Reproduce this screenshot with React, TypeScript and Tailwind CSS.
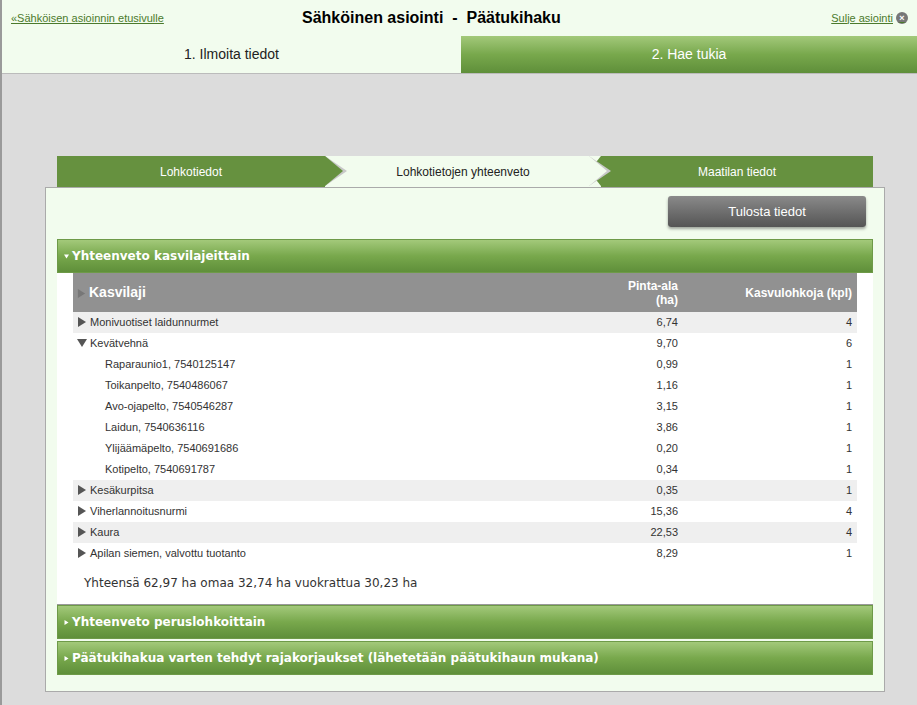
const rows: { name: string; ha: string; n: string; kind: "closed" | "open" | "child"; shade: boolean }[] = [
  { name: "Monivuotiset laidunnurmet", ha: "6,74", n: "4", kind: "closed", shade: true },
  { name: "Kevätvehnä", ha: "9,70", n: "6", kind: "open", shade: false },
  { name: "Raparaunio1, 7540125147", ha: "0,99", n: "1", kind: "child", shade: false },
  { name: "Toikanpelto, 7540486067", ha: "1,16", n: "1", kind: "child", shade: false },
  { name: "Avo-ojapelto, 7540546287", ha: "3,15", n: "1", kind: "child", shade: false },
  { name: "Laidun, 7540636116", ha: "3,86", n: "1", kind: "child", shade: false },
  { name: "Ylijäämäpelto, 7540691686", ha: "0,20", n: "1", kind: "child", shade: false },
  { name: "Kotipelto, 7540691787", ha: "0,34", n: "1", kind: "child", shade: false },
  { name: "Kesäkurpitsa", ha: "0,35", n: "1", kind: "closed", shade: true },
  { name: "Viherlannoitusnurmi", ha: "15,36", n: "4", kind: "closed", shade: false },
  { name: "Kaura", ha: "22,53", n: "4", kind: "closed", shade: true },
  { name: "Apilan siemen, valvottu tuotanto", ha: "8,29", n: "1", kind: "closed", shade: false },
];

const greenBar = "bg-gradient-to-b from-[#a3c97a] via-[#78a84c] to-[#5f8f3a]";
const verdana = "font-[DejaVu_Sans,Verdana,sans-serif]";

const Right = ({ size, color }: { size: number; color: string }) => (
  <svg width={size} height={size} viewBox="0 0 10 10" className="inline-block mr-[3px] align-[-1px]">
    <polygon points="1,0 9,5 1,10" fill={color} />
  </svg>
);
const Down = ({ size, color }: { size: number; color: string }) => (
  <svg width={size} height={size} viewBox="0 0 10 10" className="inline-block mr-[3px] align-[-1px]">
    <polygon points="0,1 10,1 5,9" fill={color} />
  </svg>
);

const SectionHeader = ({ title, open }: { title: string; open?: boolean }) => (
  <div className={`${greenBar} h-[34px] flex items-center px-[6px] border border-[#6e9a48] text-white text-[12px] ${verdana} font-bold`}>
    {open ? <Down size={5} color="#fff" /> : <Right size={5} color="#fff" />}
    {title}
  </div>
);

export default function App() {
  return (
    <div className="w-[917px] h-[705px] bg-[#dcdcdc] border-l-2 border-[#9a9a9a] font-[Liberation_Sans,Arial,sans-serif] overflow-hidden">
      <div className="h-[36px] bg-[#f2fcee] flex items-center justify-between px-[9px] relative">
        <a className="text-[11px] text-[#4b7a2c] underline">«Sähköisen asioinnin etusivulle</a>
        <div className="absolute left-[300px] text-[16px] font-bold text-black">Sähköinen asiointi&nbsp; - &nbsp;Päätukihaku</div>
        <a className="text-[11px] text-[#4b7a2c] underline flex items-center gap-[3px]">
          Sulje asiointi
          <span className="w-[12px] h-[12px] rounded-full bg-[#777] text-white text-[9px] leading-[12px] text-center font-bold">×</span>
        </a>
      </div>
      <div className="h-[38px] flex border-b border-[#bbb]">
        <div className="w-[459px] bg-[#f2fcee] flex items-center justify-center text-[14px] text-[#222]">1. Ilmoita tiedot</div>
        <div className={`flex-1 ${greenBar} flex items-center justify-center text-[14px] text-white`}>2. Hae tukia</div>
      </div>
      <div className="pt-[82px] pl-[43px]">
        <div className="ml-[12px] w-[816px] h-[31px] flex text-[12px]">
          <div className="w-[268px] bg-[#66913f] text-white flex items-center justify-center">Lohkotiedot</div>
          <div className="w-[276px] bg-[#f2fcee] text-[#222] flex items-center justify-center relative">
            <div className="absolute left-0 top-0 w-0 h-0 border-y-[15.5px] border-y-transparent border-l-[22px] border-l-[#c8c8c8]" />
            <div className="absolute left-0 top-0 w-0 h-0 border-y-[15.5px] border-y-transparent border-l-[18px] border-l-[#66913f]" />
            <div className="absolute right-0 top-0 w-0 h-0 border-y-[15.5px] border-y-transparent border-r-[12px] border-r-[#66913f]" />
            <div className="absolute right-[-10px] top-0 w-0 h-0 border-y-[15.5px] border-y-transparent border-l-[22px] border-l-[#c8c8c8] z-10" />
            <div className="absolute right-[-6px] top-0 w-0 h-0 border-y-[15.5px] border-y-transparent border-l-[18px] border-l-[#f2fcee] z-10" />
            Lohkotietojen yhteenveto
          </div>
          <div className="flex-1 bg-[#66913f] text-white flex items-center justify-center">Maatilan tiedot</div>
        </div>
        <div className="w-[840px] h-[505px] bg-[#f2fcee] border border-[#aaa] px-[11px] pt-[8px]">
          <div className="flex justify-end pr-[7px]">
            <button className="w-[198px] h-[31px] rounded-[3px] bg-gradient-to-b from-[#8a8a8a] to-[#555] text-white text-[13px] shadow-[0_2px_3px_rgba(0,0,0,0.35)]">Tulosta tiedot</button>
          </div>
          <div className="mt-[12px]">
            <SectionHeader title="Yhteenveto kasvilajeittain" open />
            <div className="bg-white px-[16px] pb-[12px]">
              <div className="h-[39px] bg-[#919191] text-white font-bold flex items-center">
                <div className="flex-1 pl-[4px] text-[14px]"><Right size={9} color="#777" />Kasvilaji</div>
                <div className="w-[80px] text-right text-[12px] leading-[14px] pr-[14px]">Pinta-ala<br />(ha)</div>
                <div className="w-[165px] text-right text-[12px] pr-[5px]">Kasvulohkoja (kpl)</div>
              </div>
              {rows.map((r) => (
                <div key={r.name} className={`h-[21px] flex items-center text-[11px] text-[#333] ${r.shade ? "bg-[#efefef]" : ""}`}>
                  <div className={`flex-1 ${r.kind === "child" ? "pl-[32px]" : "pl-[4px]"}`}>
                    {r.kind === "closed" && <Right size={10} color="#555" />}
                    {r.kind === "open" && <Down size={10} color="#555" />}
                    {r.name}
                  </div>
                  <div className="w-[80px] text-right pr-[14px]">{r.ha}</div>
                  <div className="w-[165px] text-right pr-[5px]">{r.n}</div>
                </div>
              ))}
              <div className={`mt-[10px] pl-[11px] text-[12px] text-[#333] ${verdana}`}>
                Yhteensä 62,97 ha omaa 32,74 ha vuokrattua 30,23 ha
              </div>
            </div>
            <div className="border-t border-[#999]" />
            <SectionHeader title="Yhteenveto peruslohkoittain" />
            <div className="h-[2px]" />
            <SectionHeader title="Päätukihakua varten tehdyt rajakorjaukset (lähetetään päätukihaun mukana)" />
          </div>
        </div>
      </div>
    </div>
  );
}
